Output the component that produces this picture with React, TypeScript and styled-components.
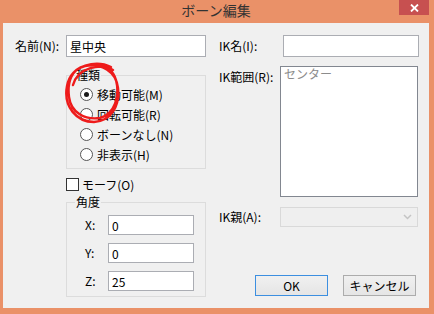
import { Fragment } from "react";
import { createGlobalStyle, styled } from "styled-components";

const GlobalStyle = createGlobalStyle`
  html, body {
    margin: 0;
    padding: 0;
    background: #ea9168;
  }
  body {
    font-family: "Noto Sans CJK JP", "Noto Sans", sans-serif;
    font-size: 12px;
    color: #000;
  }
  * {
    box-sizing: border-box;
  }
`;

const Frame = styled.div`
  width: 434px;
  height: 314px;
  background: #ea9168;
  display: flex;
  flex-direction: column;
  padding: 0 5px 6px 3px;
`;

const TitleBar = styled.div`
  height: 23px;
  display: grid;
  grid-template-columns: 1fr auto 1fr;
  align-items: start;
`;

const Title = styled.div`
  grid-column: 2;
  font-size: 14px;
  line-height: 21px;
  color: #333;
`;

const CloseButton = styled.div`
  grid-column: 3;
  justify-self: end;
  width: 30px;
  height: 15px;
  background: #c75050;
  display: flex;
  align-items: center;
  justify-content: center;
`;

const Client = styled.div`
  flex: 1;
  position: relative;
  background: #f0f0f0;
  display: flex;
  gap: 13px;
  padding: 12px 0 0 12px;
`;

const LeftPane = styled.div`
  display: grid;
  grid-template-columns: 51px 140px;
  align-content: start;
`;

const RightPane = styled.div`
  display: grid;
  grid-template-columns: 61px 139px;
  align-content: start;
`;

const Label = styled.div<{ $h: number; $top?: number }>`
  line-height: ${(p) => p.$h}px;
  margin-top: ${(p) => p.$top ?? 0}px;
  white-space: nowrap;
`;

const TextBox = styled.input<{ $w: number; $h: number; $left?: number }>`
  width: ${(p) => p.$w}px;
  height: ${(p) => p.$h}px;
  margin: 0 0 0 ${(p) => p.$left ?? 0}px;
  border: 1px solid #abadb3;
  background: #fff;
  padding: 0 3px;
  font: inherit;
  font-size: 12px;
  color: #000;
  outline: none;
`;

const Group = styled.fieldset<{ $top: number; $bottom: number }>`
  grid-column: 2;
  margin: ${(p) => p.$top}px 0 0 0;
  padding: 0 0 ${(p) => p.$bottom}px 8px;
  border: 1px solid #dcdcdc;
  min-width: 0;
`;

const Legend = styled.legend`
  padding: 0 1px;
  line-height: 14px;
  font-size: 12px;
`;

const RadioList = styled.div`
  display: flex;
  flex-direction: column;
  margin-left: 5px;
  padding-top: 2px;
`;

const RadioRow = styled.label`
  height: 20px;
  display: flex;
  align-items: center;
  gap: 4px;
  white-space: nowrap;
`;

const RadioDot = styled.span<{ $on?: boolean }>`
  width: 13px;
  height: 13px;
  border-radius: 50%;
  border: 1px solid #555;
  background: #fff;
  display: flex;
  align-items: center;
  justify-content: center;
  &::after {
    content: "";
    width: 5px;
    height: 5px;
    border-radius: 50%;
    background: ${(p) => (p.$on ? "#1a1a1a" : "transparent")};
  }
`;

const CheckRow = styled.label`
  grid-column: 2;
  margin-top: 9px;
  height: 13px;
  display: flex;
  align-items: center;
  gap: 3px;
  line-height: 13px;
  white-space: nowrap;
`;

const CheckBox = styled.span`
  width: 13px;
  height: 13px;
  border: 1px solid #333;
  background: #fff;
`;

const AxisGrid = styled.div`
  display: grid;
  grid-template-columns: 23px 86px;
  row-gap: 8px;
  margin-left: 10px;
  padding-top: 6px;
`;

const ListArea = styled.div`
  width: 138px;
  height: 131px;
  margin-top: 9px;
  border: 1px solid #828790;
  background: #fff;
  padding: 0 3px;
  line-height: 14px;
  color: #8c8c8c;
`;

const Select = styled.div`
  width: 138px;
  height: 20px;
  margin-top: 10px;
  border: 1px solid #d9d9d9;
  background: #efefef;
  display: flex;
  align-items: center;
  justify-content: flex-end;
  padding-right: 5px;
`;

const ButtonRow = styled.div`
  grid-column: 1 / -1;
  display: flex;
  justify-content: flex-end;
  gap: 15px;
  margin-top: 48px;
  padding-right: 3px;
`;

const Button = styled.button<{ $primary?: boolean }>`
  width: 73px;
  height: 21px;
  border: 1px solid ${(p) => (p.$primary ? "#3c8fe0" : "#acacac")};
  background: linear-gradient(#f0f0f0, #e5e5e5);
  font: inherit;
  font-size: 12px;
  color: #000;
  padding: 0;
`;

// hand-drawn red circle marked over the screenshot
const Scribble = styled.svg`
  position: absolute;
  left: 58px;
  top: 37px;
  pointer-events: none;
`;

const kinds = [
  { label: "移動可能(M)", on: true },
  { label: "回転可能(R)" },
  { label: "ボーンなし(N)" },
  { label: "非表示(H)" },
];

const axes = [
  { name: "X:", value: "0" },
  { name: "Y:", value: "0" },
  { name: "Z:", value: "25" },
];

const App = () => {
  return (
    <>
      <GlobalStyle />
      <Frame>
        <TitleBar>
          <Title>ボーン編集</Title>
          <CloseButton>
            <svg width="9" height="8" viewBox="0 0 9 8">
              <path d="M1 0.5 L8 7.5 M8 0.5 L1 7.5" stroke="#fff" strokeWidth="1.8" />
            </svg>
          </CloseButton>
        </TitleBar>
        <Client>
          <LeftPane>
            <Label $h={22}>名前(N):</Label>
            <TextBox $w={140} $h={22} readOnly value="星中央" />
            <Group $top={11} $bottom={4}>
              <Legend>種類</Legend>
              <RadioList>
                {kinds.map((k) => (
                  <RadioRow key={k.label}>
                    <RadioDot $on={k.on} />
                    {k.label}
                  </RadioRow>
                ))}
              </RadioList>
            </Group>
            <CheckRow>
              <CheckBox />
              モーフ(O)
            </CheckRow>
            <Group $top={4} $bottom={5}>
              <Legend>角度</Legend>
              <AxisGrid>
                {axes.map((a) => (
                  <Fragment key={a.name}>
                    <Label $h={20}>{a.name}</Label>
                    <TextBox $w={86} $h={20} readOnly value={a.value} />
                  </Fragment>
                ))}
              </AxisGrid>
            </Group>
          </LeftPane>
          <RightPane>
            <Label $h={22}>IK名(I):</Label>
            <TextBox $w={136} $h={22} $left={3} readOnly value="" />
            <Label $h={14} $top={13}>
              IK範囲(R):
            </Label>
            <ListArea>センター</ListArea>
            <Label $h={20} $top={10}>
              IK親(A):
            </Label>
            <Select>
              <svg width="9" height="6" viewBox="0 0 9 6">
                <path d="M1 1 L4.5 4.5 L8 1" stroke="#c4c4c4" strokeWidth="1.5" fill="none" />
              </svg>
            </Select>
            <ButtonRow>
              <Button $primary>OK</Button>
              <Button>キャンセル</Button>
            </ButtonRow>
          </RightPane>
          <Scribble width="62" height="64" viewBox="0 0 62 64">
            <path
              d="M50 7 C36 0 10 4 6 26 C2 47 16 62 33 62 C50 61 59 46 57 28 C55 11 40 3 24 6 C11 9 6 21 8 37 C10 53 24 60 39 58 C54 54 59 36 55 20 C52 10 44 5 34 4 M52 10 C40 3 17 7 12 25"
              stroke="#ee1b1b"
              strokeWidth="2.4"
              fill="none"
              strokeLinecap="round"
            />
          </Scribble>
        </Client>
      </Frame>
    </>
  );
};

export default App;
